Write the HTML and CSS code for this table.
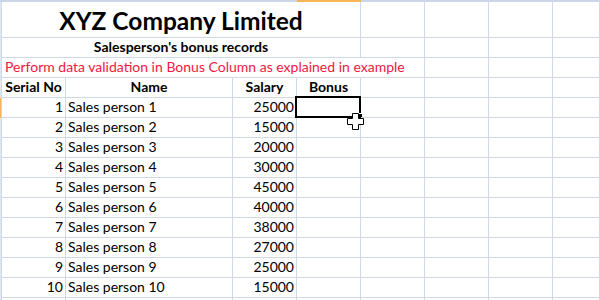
FILE: index.html
```html
<!DOCTYPE html>
<html>
<head>
<meta charset="utf-8">
<link rel="stylesheet" href="styles.css">
</head>
<body>
<div class="sheet">
  <div class="hb"></div><div class="hb"></div><div class="hb"></div><div class="hb"></div><div class="hb sel"></div><div class="hb"></div><div class="hb"></div><div class="hb"></div><div class="hb"></div>

  <div class="rh"></div>
  <div class="c a title span4">XYZ Company Limited</div>
  <div class="c"></div><div class="c"></div><div class="c"></div><div class="c"></div>

  <div class="rh"></div>
  <div class="c a sub span4">Salesperson's bonus records</div>
  <div class="c"></div><div class="c"></div><div class="c"></div><div class="c"></div>

  <div class="rh"></div>
  <div class="c a note span5">Perform data validation in Bonus Column as explained in example</div>
  <div class="c"></div><div class="c"></div><div class="c"></div>

  <div class="rh"></div>
  <div class="c a hd ctr">Serial No</div><div class="c hd ctr">Name</div><div class="c hd ctr">Salary</div><div class="c hd ctr">Bonus</div>
  <div class="c"></div><div class="c"></div><div class="c"></div><div class="c"></div>

  <div class="rh sel"></div>
  <div class="c a num">1</div><div class="c">Sales person 1</div><div class="c num">25000</div>
  <div class="c active"><div class="selbox"></div><div class="handle"></div>
    <svg class="cursor" width="17" height="17" viewBox="0 0 17 17"><path d="M5.5 0.5h6v5h5v6h-5v5h-6v-5h-5v-6h5z" fill="#fff" stroke="#000" stroke-width="1"/></svg>
  </div>
  <div class="c"></div><div class="c"></div><div class="c"></div><div class="c"></div>

  <div class="rh"></div>
  <div class="c a num">2</div><div class="c">Sales person 2</div><div class="c num">15000</div><div class="c"></div>
  <div class="c"></div><div class="c"></div><div class="c"></div><div class="c"></div>

  <div class="rh"></div>
  <div class="c a num">3</div><div class="c">Sales person 3</div><div class="c num">20000</div><div class="c"></div>
  <div class="c"></div><div class="c"></div><div class="c"></div><div class="c"></div>

  <div class="rh"></div>
  <div class="c a num">4</div><div class="c">Sales person 4</div><div class="c num">30000</div><div class="c"></div>
  <div class="c"></div><div class="c"></div><div class="c"></div><div class="c"></div>

  <div class="rh"></div>
  <div class="c a num">5</div><div class="c">Sales person 5</div><div class="c num">45000</div><div class="c"></div>
  <div class="c"></div><div class="c"></div><div class="c"></div><div class="c"></div>

  <div class="rh"></div>
  <div class="c a num">6</div><div class="c">Sales person 6</div><div class="c num">40000</div><div class="c"></div>
  <div class="c"></div><div class="c"></div><div class="c"></div><div class="c"></div>

  <div class="rh"></div>
  <div class="c a num">7</div><div class="c">Sales person 7</div><div class="c num">38000</div><div class="c"></div>
  <div class="c"></div><div class="c"></div><div class="c"></div><div class="c"></div>

  <div class="rh"></div>
  <div class="c a num">8</div><div class="c">Sales person 8</div><div class="c num">27000</div><div class="c"></div>
  <div class="c"></div><div class="c"></div><div class="c"></div><div class="c"></div>

  <div class="rh"></div>
  <div class="c a num">9</div><div class="c">Sales person 9</div><div class="c num">25000</div><div class="c"></div>
  <div class="c"></div><div class="c"></div><div class="c"></div><div class="c"></div>

  <div class="rh"></div>
  <div class="c a num">10</div><div class="c">Sales person 10</div><div class="c num">15000</div><div class="c"></div>
  <div class="c"></div><div class="c"></div><div class="c"></div><div class="c"></div>

  <div class="rh"></div>
  <div class="c a"></div><div class="c"></div><div class="c"></div><div class="c"></div>
  <div class="c"></div><div class="c"></div><div class="c"></div><div class="c"></div>
</div>
</body>
</html>
```

FILE: styles.css
```css
html, body {
  margin: 0;
  padding: 0;
  background: #fff;
  overflow: hidden;
}
.sheet {
  width: 600px;
  height: 300px;
  overflow: hidden;
  display: grid;
  grid-template-columns: 1px 65px 167px 64px 64px 64px 64px 64px 1fr;
  grid-template-rows: 2px 36px repeat(13, 20px);
  font-family: "Lato", "Liberation Sans", sans-serif;
  font-size: 14px;
  color: #000;
}
.hb {
  background: #c9d6e8;
}
.hb.sel {
  background: #f6b457;
}
.rh {
  background: #dfe7f2;
}
.rh.sel {
  background: #f6b457;
}
.c {
  box-sizing: border-box;
  border-right: 1px solid #d0d7e5;
  border-bottom: 1px solid #d0d7e5;
  display: flex;
  align-items: flex-end;
  padding: 0 2px 2px 2px;
  white-space: nowrap;
  line-height: 16px;
  position: relative;
}
.c.a {
  border-left: 1px solid #d0d7e5;
}
.span4 {
  grid-column: span 4;
  justify-content: center;
}
.span5 {
  grid-column: span 5;
}
.title {
  font-size: 24.5px;
  font-weight: 700;
  line-height: 28px;
  padding-bottom: 2px;
}
.sub {
  font-size: 14px;
  font-weight: 700;
  padding-bottom: 2px;
}
.note {
  color: #f2183f;
  padding-left: 3px;
}
.hd {
  font-weight: 700;
}
.ctr {
  justify-content: center;
}
.num {
  justify-content: flex-end;
  padding-right: 2px;
}
.selbox {
  position: absolute;
  left: -2px;
  top: -2px;
  width: 66px;
  height: 22px;
  box-sizing: border-box;
  border: 2px solid #000;
}
.handle {
  position: absolute;
  right: -3px;
  bottom: -3px;
  width: 5px;
  height: 5px;
  background: #000;
  border: 1px solid #fff;
}
.cursor {
  position: absolute;
  left: 50px;
  top: 15px;
  z-index: 2;
}
```
